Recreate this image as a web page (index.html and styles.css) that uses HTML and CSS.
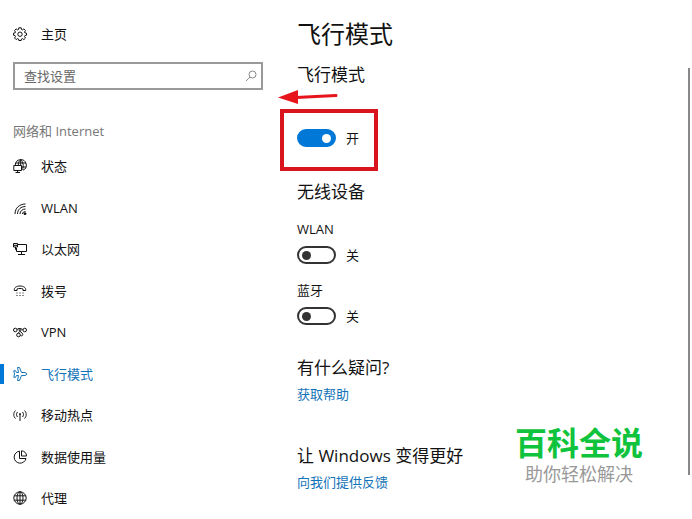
FILE: index.html
```html
<!DOCTYPE html>
<html lang="zh-CN">
<head>
    <meta charset="UTF-8">
    <meta name="viewport" content="width=device-width, initial-scale=1.0">
    <title>飞行模式</title>
    <link rel="stylesheet" href="styles.css">
</head>
<body>
    <div class="page">
        <aside class="sidebar">
            <a class="nav-link" href="#">
                <svg class="icon" viewBox="0 0 14 14"><path d="M5.8 .8h2.4l.3 1.7 1 .4 1.4-1 1.6 1.7-1 1.4.4.9 1.6.3v2l-1.6.4-.4 1 1 1.4-1.6 1.6-1.4-1-1 .4-.3 1.5H5.8l-.3-1.5-1-.4-1.4 1-1.6-1.6 1-1.4-.4-1L.5 8.200v-2l1.600-.3.4-.9-1-1.400 1.600-1.700 1.400 1 1-.4z"/><circle cx="7" cy="7.200" r="2.200"/></svg>
                <span>主页</span>
            </a>
            <div class="search">
                <input type="text" placeholder="查找设置" aria-label="查找设置">
                <svg class="search-icon" viewBox="0 0 12 12"><circle cx="7.500" cy="4.500" r="3.500"/><path d="M5 7L1 11"/></svg>
            </div>
            <h2 class="group-title">网络和 Internet</h2>
            <ul class="nav">
                <li><a class="nav-link" href="#">
                    <svg class="icon" viewBox="0 0 14 14"><path d="M2.300 6A5.500 5.500 0 1 1 10 11.200M3 4h10M9 8h4M7.700.7C5.800 2 5.300 4 5.300 6M7.700.7c2.800 2.300 3 6.500 1.800 10M7.700.7V6M.8 6.500h7.700v5H.8zM4.600 11.500v2M2.500 13.500h4.500"/></svg>
                    <span>状态</span></a></li>
                <li><a class="nav-link" href="#">
                    <svg class="icon" viewBox="0 0 14 14"><path d="M2 13C2 7 6.500 3 12.500 3M4.500 13c0-4.500 3.500-7.500 8-7.500M7 13c0-3 2.500-5 5.500-5M9.500 13c0-1.500 1.200-2.500 3-2.500"/><circle class="fill" cx="12" cy="12.700" r="1"/></svg>
                    <span>WLAN</span></a></li>
                <li><a class="nav-link" href="#">
                    <svg class="icon" viewBox="0 0 14 14"><path d="M4.500 2.500h9v7h-10V6M8.500 9.500v3M5 12.500h7M.5 1.500h4v3.500h-4zM2.500 5v2.500h1M.5 3.300h4"/></svg>
                    <span>以太网</span></a></li>
                <li><a class="nav-link" href="#">
                    <svg class="icon" viewBox="0 0 14 14"><path d="M1.300 6.500C.8 3.700 3.500 2 7 2s6.200 1.700 5.700 4.500H10V5C8 4.300 6 4.300 4 5v1.500z"/><path class="dots" d="M3.500 9h7M3.500 11.500h7"/></svg>
                    <span>拨号</span></a></li>
                <li><a class="nav-link" href="#">
                    <svg class="icon" viewBox="0 0 14 14"><circle cx="2.300" cy="5" r="1.800"/><circle cx="11.700" cy="5" r="1.800"/><circle cx="5.500" cy="10" r="1.800"/><path d="M4 4.500C5.500 3 8.500 3 8 5.200 7.700 6.500 5.500 7 5 8.300M10 5C8.500 3 6 3.500 6 5c0 1.500 3.800 2.500 3.800 4.500 0 1.500-2 1.800-2.500.8"/></svg>
                    <span>VPN</span></a></li>
                <li><a class="nav-link active" href="#">
                    <svg class="icon" viewBox="0 0 14 14"><path d="M4.500.5h2L8.500 5.500h3.700c1.700 0 1.700 3 0 3H8.500L6.500 13.500h-2l1-5h-2l-1 1.800H.8L1.500 7 .8 3.700h1.700l1 1.800h2z"/></svg>
                    <span>飞行模式</span></a></li>
                <li><a class="nav-link" href="#">
                    <svg class="icon" viewBox="0 0 14 14"><path d="M2.500 2.500c-2.300 2.200-2.300 5.800 0 8M4.500 4c-1.300 1.500-1.300 3.500 0 5M9.500 4c1.300 1.500 1.300 3.500 0 5M11.500 2.500c2.300 2.200 2.300 5.800 0 8M7 6v7"/><circle class="fill" cx="7" cy="6" r=".5"/></svg>
                    <span>移动热点</span></a></li>
                <li><a class="nav-link" href="#">
                    <svg class="icon" viewBox="0 0 14 14"><path d="M6.500 1.200a6 6 0 1 0 6.500 7.300H6.500zM8.500.8v5.200h5C13.500 3 11.500 1 8.500.8z"/></svg>
                    <span>数据使用量</span></a></li>
                <li><a class="nav-link" href="#">
                    <svg class="icon" viewBox="0 0 14 14"><circle cx="7" cy="7" r="6.200"/><ellipse cx="7" cy="7" rx="3" ry="6.200"/><path d="M7 .8v12.400M1.300 4.800h11.400M1.300 9.200h11.400"/></svg>
                    <span>代理</span></a></li>
            </ul>
        </aside>

        <main class="content">
            <h1>飞行模式</h1>
            <section class="airplane">
                <h2>飞行模式</h2>
                <label class="switch marked">
                    <input type="checkbox" aria-label="飞行模式" checked>
                    <span>开</span>
                    <svg class="arrow" viewBox="0 0 60 16"><path class="line" d="M18 8.500L58 6.500"/><path d="M0 8.500L20 1v14z"/></svg>
                </label>
            </section>
            <section class="devices">
                <h2>无线设备</h2>
                <div class="device">
                    <label for="wlan">WLAN</label>
                    <div class="switch"><input type="checkbox" id="wlan"><span>关</span></div>
                </div>
                <div class="device">
                    <label for="bluetooth">蓝牙</label>
                    <div class="switch"><input type="checkbox" id="bluetooth"><span>关</span></div>
                </div>
            </section>
            <section class="help">
                <h2>有什么疑问?</h2>
                <a href="#">获取帮助</a>
            </section>
            <section class="help">
                <h2>让 Windows 变得更好</h2>
                <a href="#">向我们提供反馈</a>
            </section>
        </main>
        <div class="scrollbar"></div>
        <div class="watermark">
            <strong>百科全说</strong>
            <span>助你轻松解决</span>
        </div>
    </div>
</body>
</html>
```
FILE: styles.css
```css
* {
    box-sizing: border-box;
}
body {
    margin: 0;
    background-color: #fff;
    color: #111;
    font-family: "Open Sans", "Noto Sans CJK SC", sans-serif;
    font-size: 13px;
    line-height: 20px;
}
h1, h2, ul {
    margin: 0;
    padding: 0;
    font-weight: normal;
}
a {
    color: #1373b8;
    text-decoration: none;
}
.page {
    position: relative;
    display: grid;
    grid-template-columns: 263px 1fr;
    column-gap: 34px;
    min-height: 100vh;
}

/* 左侧导航 */
.sidebar {
    display: flex;
    flex-direction: column;
    padding: 24px 0 11px;
}
.nav-link {
    display: flex;
    align-items: center;
    gap: 14px;
    padding-left: 13px;
    color: #111;
}
.icon {
    width: 14px;
    height: 14px;
    fill: none;
    stroke: currentColor;
    stroke-width: 1;
}
.icon .fill {
    fill: currentColor;
}
.icon .dots {
    stroke-dasharray: 1 2;
}
.search {
    position: relative;
    margin: 18px 0 31px 13px;
}
.search input {
    display: block;
    width: 100%;
    height: 28px;
    padding: 0 30px 0 9px;
    border: 2px solid #999;
    border-radius: 0;
    font: inherit;
}
.search input::placeholder {
    color: #666;
}
.search-icon {
    position: absolute;
    top: 8px;
    right: 6px;
    width: 12px;
    height: 12px;
    fill: none;
    stroke: #888;
}
.group-title {
    margin-bottom: 15px;
    padding-left: 13px;
    color: #777;
    font-size: 13px;
}
.nav {
    flex: 1;
    display: flex;
    flex-direction: column;
    justify-content: space-between;
    list-style: none;
}
.nav-link.active {
    padding-left: 9px;
    border-left: 4px solid #0078d7;
    color: #1373b8;
}

/* 右侧内容 */
.content {
    padding-top: 16px;
}
h1 {
    font-size: 24px;
    line-height: 36px;
}
.content h2 {
    font-size: 17px;
    line-height: 24px;
}
.airplane {
    margin-top: 11px;
}
.switch {
    display: flex;
    align-items: center;
    gap: 10px;
}
.switch input {
    appearance: none;
    display: flex;
    align-items: center;
    width: 39px;
    height: 18px;
    margin: 0;
    padding: 0 3px;
    border: 2px solid #333;
    border-radius: 9px;
}
.switch input::before {
    content: "";
    width: 9px;
    height: 9px;
    border-radius: 50%;
    background-color: #333;
}
.switch input:checked {
    justify-content: flex-end;
    border-color: #0078d7;
    background-color: #0078d7;
}
.switch input:checked::before {
    background-color: #fff;
}
.marked {
    position: relative;
    width: 98px;
    height: 62px;
    margin: 22px 0 9px -17px;
    padding: 0 0 4px 13px;
    border: 4px solid #d8141c;
}
.marked .arrow {
    position: absolute;
    top: -24px;
    left: -6px;
    width: 60px;
    height: 16px;
    fill: #e8141c;
}
.arrow .line {
    stroke: #e8141c;
    stroke-width: 3;
    stroke-linecap: round;
}
.device {
    display: grid;
    gap: 6px;
    margin-top: 15px;
}
.help {
    display: grid;
    gap: 4px;
    justify-items: start;
    margin-top: 30px;
}
.help + .help {
    margin-top: 40px;
}
.scrollbar {
    position: absolute;
    top: 68px;
    right: 2px;
    bottom: 44px;
    width: 2px;
    background-color: #888;
}
.watermark {
    position: absolute;
    right: 49px;
    bottom: 32px;
    display: grid;
    justify-items: center;
    color: #999;
    font-family: "Liberation Sans", "Noto Sans CJK SC", sans-serif;
    font-size: 18px;
    line-height: 24px;
}
.watermark strong {
    color: #0fc43c;
    font-size: 32px;
    line-height: 38px;
}
```
